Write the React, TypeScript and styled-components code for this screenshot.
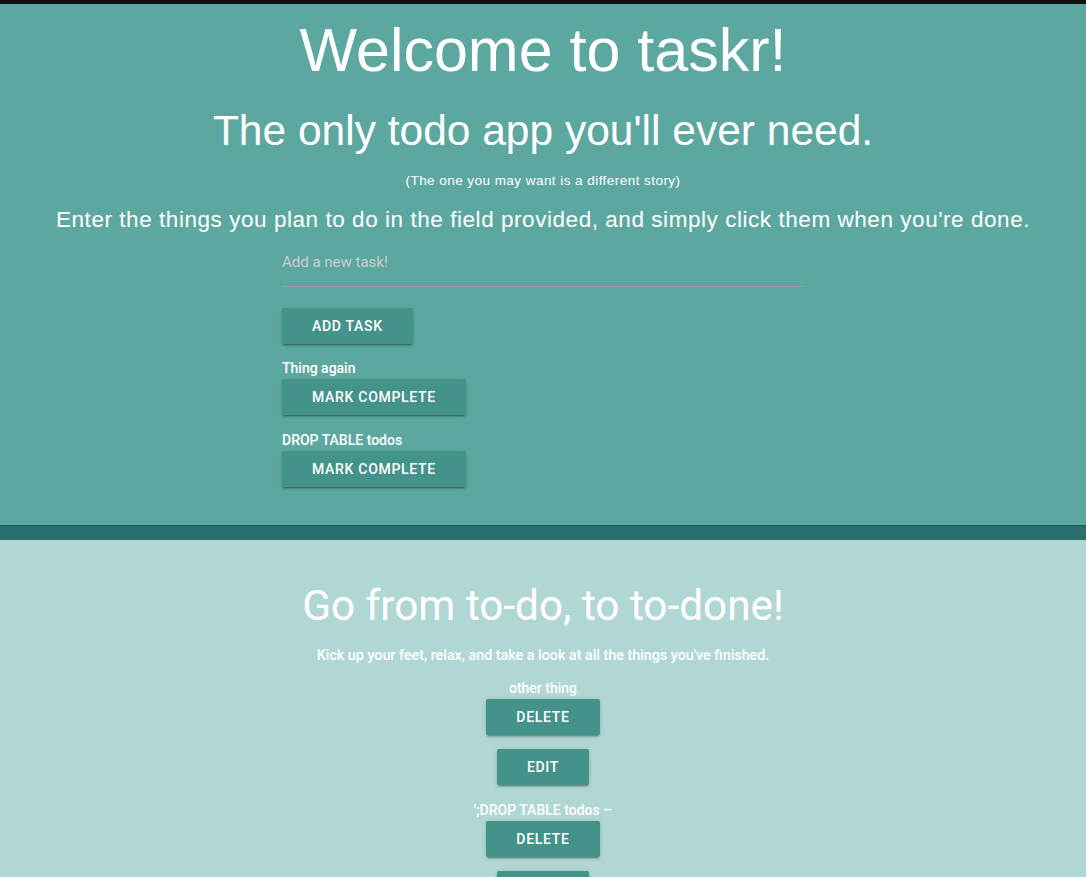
import React from "react";
import styled, { createGlobalStyle } from "styled-components";

const Global = createGlobalStyle`
  html, body { margin: 0; padding: 0; }
  body {
    background: #b0d7d4;
    font-family: Roboto, "Noto Sans", sans-serif;
    color: #fff;
    -webkit-font-smoothing: antialiased;
  }
  * { box-sizing: border-box; }
`;

const Page = styled.div`
  border-top: 4px solid #111;
  display: flex;
  flex-direction: column;
`;

const Hero = styled.section`
  background: #5ca8a0;
  padding: 16px 0 38px;
  display: flex;
  flex-direction: column;
  align-items: center;
  text-align: center;
`;

const Title = styled.h1`
  margin: 0;
  font-family: "Liberation Sans", Arial, sans-serif;
  font-weight: 400;
  font-size: 61px;
  line-height: 60px;
`;

const Subtitle = styled.h2`
  margin: 29px 0 0;
  font-family: "Liberation Sans", Arial, sans-serif;
  font-weight: 400;
  font-size: 42.5px;
  line-height: 43px;
`;

const Aside = styled.p`
  margin: 21px 0 0;
  font-family: "Liberation Sans", Arial, sans-serif;
  font-size: 13.5px;
  letter-spacing: 0.45px;
  line-height: 16px;
`;

const Lead = styled.p`
  margin: 18px 0 0;
  font-family: "Liberation Sans", Arial, sans-serif;
  font-size: 22.5px;
  letter-spacing: 0.55px;
  line-height: 26px;
  white-space: nowrap;
`;

const Form = styled.div`
  width: 522px;
  margin-top: 5px;
  display: flex;
  flex-direction: column;
  align-items: flex-start;
  text-align: left;
`;

const TaskInput = styled.input`
  width: 100%;
  height: 49px;
  padding: 0;
  margin: 0 0 21px;
  border: none;
  border-bottom: 1px solid #a79b9b;
  background: transparent;
  outline: none;
  font-family: Roboto, sans-serif;
  font-size: 15px;
  color: #fff;
  &::placeholder { color: #cbcbcb; }
`;

const Button = styled.button`
  height: 36px;
  padding: 0 30px;
  border: none;
  border-radius: 2px;
  background: #43938a;
  color: #fff;
  font-family: Roboto, sans-serif;
  font-weight: 500;
  font-size: 14px;
  letter-spacing: 0.7px;
  text-transform: uppercase;
  line-height: 36px;
  cursor: pointer;
  box-shadow: 0 2px 2px 0 rgba(0, 0, 0, 0.14), 0 1px 5px 0 rgba(0, 0, 0, 0.12),
    0 3px 1px -2px rgba(0, 0, 0, 0.2);
`;

const TaskList = styled.div<{ $center?: boolean }>`
  display: flex;
  flex-direction: column;
  align-items: ${(p) => (p.$center ? "center" : "flex-start")};
  gap: 16px;
  margin-top: ${(p) => (p.$center ? "14px" : "15px")};
`;

const Task = styled.div<{ $center?: boolean }>`
  display: flex;
  flex-direction: column;
  align-items: ${(p) => (p.$center ? "center" : "flex-start")};
  gap: 14px;
`;

const TaskHead = styled.div<{ $center?: boolean }>`
  display: flex;
  flex-direction: column;
  align-items: ${(p) => (p.$center ? "center" : "flex-start")};
  gap: 2px;
`;

const TaskLabel = styled.div`
  font-family: Roboto, sans-serif;
  font-weight: 500;
  font-size: 14px;
  line-height: 18px;
`;

const Band = styled.div`
  height: 15px;
  background: #2b6e70;
  border-top: 1px solid #1e5657;
`;

const Done = styled.section`
  background: #b0d7d4;
  padding: 42px 0 40px;
  display: flex;
  flex-direction: column;
  align-items: center;
  text-align: center;
`;

const DoneTitle = styled.h3`
  margin: 0;
  font-family: Roboto, sans-serif;
  font-weight: 400;
  font-size: 42.3px;
  line-height: 48px;
`;

const DoneLead = styled.p`
  margin: 15px 0 0;
  font-family: Roboto, sans-serif;
  font-weight: 500;
  font-size: 14.3px;
  line-height: 20px;
`;

const todos = ["Thing again", "DROP TABLE todos"];
const done = ["other thing", "';DROP TABLE todos –"];

export default function App() {
  return (
    <Page>
      <Global />
      <Hero>
        <Title>Welcome to taskr!</Title>
        <Subtitle>The only todo app you'll ever need.</Subtitle>
        <Aside>(The one you may want is a different story)</Aside>
        <Lead>
          Enter the things you plan to do in the field provided, and simply click them when you're done.
        </Lead>
        <Form>
          <TaskInput placeholder="Add a new task!" />
          <Button>Add Task</Button>
          <TaskList>
            {todos.map((t) => (
              <TaskHead key={t}>
                <TaskLabel>{t}</TaskLabel>
                <Button>Mark Complete</Button>
              </TaskHead>
            ))}
          </TaskList>
        </Form>
      </Hero>
      <Band />
      <Done>
        <DoneTitle>Go from to-do, to to-done!</DoneTitle>
        <DoneLead>Kick up your feet, relax, and take a look at all the things you've finished.</DoneLead>
        <TaskList $center>
          {done.map((t) => (
            <Task $center key={t}>
              <TaskHead $center>
                <TaskLabel>{t}</TaskLabel>
                <Button>Delete</Button>
              </TaskHead>
              <Button>Edit</Button>
            </Task>
          ))}
        </TaskList>
      </Done>
    </Page>
  );
}
